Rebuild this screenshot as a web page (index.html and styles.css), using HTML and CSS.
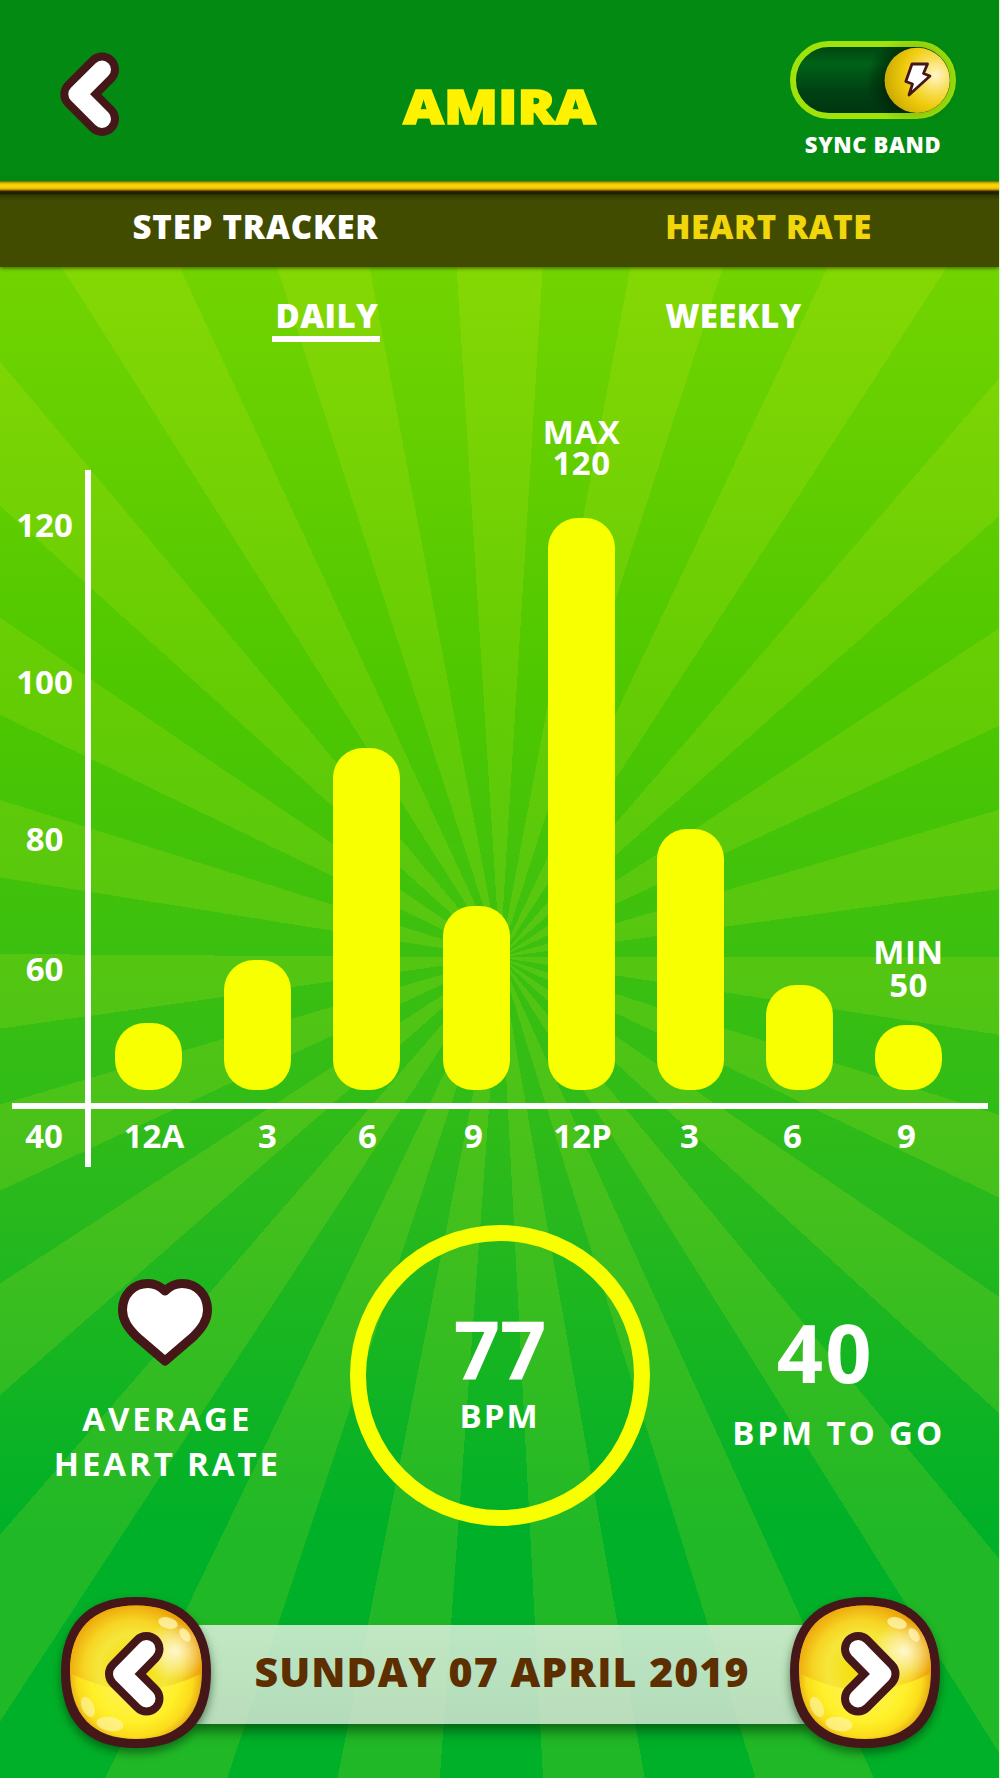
FILE: index.html
```
<!DOCTYPE html>
<html lang="en">
<head>
  <meta charset="UTF-8">
  <meta name="viewport" content="width=device-width, initial-scale=1.0">
  <title>Heart Rate</title>
  <link rel="stylesheet" href="styles.css">
</head>
<body>
  <div class="app">
    <header class="header">
      <a class="back" href="#" aria-label="Back">
        <svg width="60" height="86" viewBox="0 0 60 86">
          <path class="chevron-outline" d="M42 17.5 L17.3 42.2 L42 66.9"/>
          <path class="chevron" d="M42 17.5 L17.3 42.2 L42 66.9"/>
        </svg>
      </a>
      <h1 class="title">AMIRA</h1>
      <div class="sync">
        <svg class="toggle" width="166" height="78" viewBox="0 0 166 78">
          <defs>
            <linearGradient id="track" x1="0" y1="0" x2="0" y2="1">
              <stop offset="0" stop-color="#00420f"/>
              <stop offset="0.28" stop-color="#006218"/>
              <stop offset="0.65" stop-color="#004113"/>
              <stop offset="1" stop-color="#003510"/>
            </linearGradient>
            <radialGradient id="knob" cx="0.78" cy="0.42" r="0.75">
              <stop offset="0" stop-color="#fff6c8"/>
              <stop offset="0.35" stop-color="#f8de55"/>
              <stop offset="0.65" stop-color="#efcb0c"/>
              <stop offset="1" stop-color="#cfae04"/>
            </radialGradient>
            <radialGradient id="knobShade">
              <stop offset="0.6" stop-color="#001c06" stop-opacity="0.85"/>
              <stop offset="1" stop-color="#001c06" stop-opacity="0"/>
            </radialGradient>
            <clipPath id="trackClip">
              <rect x="3" y="3" width="160" height="72" rx="36"/>
            </clipPath>
          </defs>
          <rect x="3" y="3" width="160" height="72" rx="36" fill="url(#track)"/>
          <circle cx="124" cy="40" r="48" fill="url(#knobShade)" opacity="0.65" clip-path="url(#trackClip)"/>
          <rect x="3" y="3" width="160" height="72" rx="36" fill="none" stroke="#a0e30b" stroke-width="6"/>
          <circle cx="124" cy="40" r="46" fill="url(#knobShade)" opacity="0.2"/>
          <circle cx="127.2" cy="39.3" r="32.6" fill="url(#knob)"/>
          <path d="M122 23 H137.5 L133.5 32.5 L140 35 L119 54 L122.5 43 L115.8 40.5 Z" fill="#fff" stroke="#451719" stroke-width="2.8" stroke-linejoin="round"/>
        </svg>
        <span class="sync-label">SYNC BAND</span>
      </div>
    </header>

    <nav class="tabs">
      <a class="tab" href="#">STEP TRACKER</a>
      <a class="tab active" href="#">HEART RATE</a>
    </nav>

    <nav class="periods">
      <a class="period active" href="#">DAILY</a>
      <a class="period" href="#">WEEKLY</a>
    </nav>

    <section class="chart">
      <div class="y-labels">
        <span>120</span>
        <span>100</span>
        <span>80</span>
        <span>60</span>
      </div>
      <div class="y-axis"></div>
      <div class="bars">
        <div class="column"><div class="bar" style="height: 67px"></div></div>
        <div class="column"><div class="bar" style="height: 130px"></div></div>
        <div class="column"><div class="bar" style="height: 342px"></div></div>
        <div class="column"><div class="bar" style="height: 184px"></div></div>
        <div class="column">
          <div class="note max">MAX<br>120</div>
          <div class="bar" style="height: 572px"></div>
        </div>
        <div class="column"><div class="bar" style="height: 261px"></div></div>
        <div class="column"><div class="bar" style="height: 105px"></div></div>
        <div class="column">
          <div class="note min">MIN<br>50</div>
          <div class="bar" style="height: 65px"></div>
        </div>
      </div>
      <div class="x-axis"></div>
      <div class="origin">40</div>
      <div class="x-labels">
        <span>12A</span>
        <span>3</span>
        <span>6</span>
        <span>9</span>
        <span>12P</span>
        <span>3</span>
        <span>6</span>
        <span>9</span>
      </div>
    </section>

    <section class="stats">
      <div class="average">
        <svg width="94" height="88" viewBox="0 0 94 88">
          <path d="M47 12 C42 7 36 4.5 30 4.5 C15 4.5 4.5 16 4.5 31 C4.5 42 11 50 19 58 L47 82 L75 58 C83 50 89.5 42 89.5 31 C89.5 16 79 4.5 64 4.5 C58 4.5 52 7 47 12 Z" fill="#fff" stroke="#451719" stroke-width="9" stroke-linejoin="round"/>
        </svg>
        <p class="caption">AVERAGE<br>HEART RATE</p>
      </div>
      <div class="ring">
        <div class="number">77</div>
        <div class="unit">BPM</div>
      </div>
      <div class="remaining">
        <div class="number">40</div>
        <div class="caption">BPM TO GO</div>
      </div>
    </section>

    <footer class="date-nav">
      <a class="date-btn" href="#" aria-label="Previous day">
        <svg width="150" height="151" viewBox="0 0 150 151">
          <defs>
            <radialGradient id="dome" gradientUnits="userSpaceOnUse" cx="72" cy="72" r="70">
              <stop offset="0" stop-color="#f3dc00"/>
              <stop offset="0.5" stop-color="#f6e63a"/>
              <stop offset="0.7" stop-color="#f6d524"/>
              <stop offset="1" stop-color="#eb9a04"/>
            </radialGradient>
            <radialGradient id="bowl" gradientUnits="userSpaceOnUse" cx="74" cy="82" r="72">
              <stop offset="0" stop-color="#fff36a"/>
              <stop offset="0.6" stop-color="#fff02a"/>
              <stop offset="0.8" stop-color="#fbdc1a"/>
              <stop offset="1" stop-color="#dc8f14"/>
            </radialGradient>
            <radialGradient id="shine">
              <stop offset="0" stop-color="#fffbe0" stop-opacity="0.9"/>
              <stop offset="1" stop-color="#fffbe0" stop-opacity="0"/>
            </radialGradient>
            <clipPath id="face">
              <path d="M75 8.5 C119 8.5 141 34 141 74 C141 117 119 142 75 142 C31 142 9 117 9 74 C9 34 31 8.5 75 8.5 Z"/>
            </clipPath>
            <g id="button">
              <path d="M75 0 C126 0 150 30 150 75 C150 123 126 151 75 151 C24 151 0 123 0 75 C0 30 24 0 75 0 Z" fill="#451719"/>
              <g clip-path="url(#face)">
                <rect width="150" height="151" fill="url(#bowl)"/>
                <path d="M0 0 H150 V71 Q112 93 75 93 Q38 93 0 71 Z" fill="url(#dome)"/>
                <ellipse cx="114" cy="54" rx="32" ry="30" fill="url(#shine)"/>
              </g>
              <g fill="#fff6b0" opacity="0.8">
                <ellipse cx="107" cy="26" rx="10" ry="5.5" transform="rotate(14 107 26)"/>
                <ellipse cx="124" cy="38" rx="4.5" ry="7.5" transform="rotate(-35 124 38)"/>
                <ellipse cx="27" cy="110" rx="6" ry="11" transform="rotate(-25 27 110)" opacity="0.75"/>
                <ellipse cx="49" cy="127" rx="13.5" ry="7" transform="rotate(9 49 127)" opacity="0.8"/>
              </g>
            </g>
          </defs>
          <use href="#button"/>
          <path class="chevron-outline" d="M85.5 52 L61 77 L85.5 101.5"/>
          <path class="chevron" d="M85.5 52 L61 77 L85.5 101.5"/>
        </svg>
      </a>
      <div class="date">SUNDAY 07 APRIL 2019</div>
      <a class="date-btn" href="#" aria-label="Next day">
        <svg width="150" height="151" viewBox="0 0 150 151">
          <use href="#button"/>
          <path class="chevron-outline" d="M68 52 L92.5 77 L68 101.5"/>
          <path class="chevron" d="M68 52 L92.5 77 L68 101.5"/>
        </svg>
      </a>
    </footer>
  </div>
</body>
</html>
```
FILE: styles.css
```
* {
  box-sizing: border-box;
}
body {
  margin: 0;
  font-family: "Open Sans", "Noto Sans", sans-serif;
  font-size: 33px;
  font-weight: 700;
  color: #fff;
}
a {
  color: inherit;
  text-decoration: none;
}
svg {
  display: block;
}
.app {
  width: 1000px;
  height: 1778px;
  border-right: 1px solid #d9f3d3;
  overflow: hidden;
  /* sunburst over the vertical green fade */
  background:
    conic-gradient(from 0deg at 500px 957.5px,
      var(--ray) 0 3.54deg, transparent 0 10.7deg,
      var(--ray) 0 17.9deg, transparent 0 25.4deg,
      var(--ray) 0 32.9deg, transparent 0 40.75deg,
      var(--ray) 0 48.5deg, transparent 0 56.6deg,
      var(--ray) 0 65.1deg, transparent 0 73.5deg,
      var(--ray) 0 82.2deg, transparent 0 90deg,
      var(--ray) 0 98.8deg, transparent 0 107.5deg,
      var(--ray) 0 115.7deg, transparent 0 124.2deg,
      var(--ray) 0 132.4deg, transparent 0 140.3deg,
      var(--ray) 0 147.9deg, transparent 0 155.5deg,
      var(--ray) 0 162.7deg, transparent 0 170deg,
      var(--ray) 0 177deg, transparent 0 184.2deg,
      var(--ray) 0 191.2deg, transparent 0 198.4deg,
      var(--ray) 0 205.7deg, transparent 0 213.2deg,
      var(--ray) 0 220.9deg, transparent 0 228.8deg,
      var(--ray) 0 236.9deg, transparent 0 245deg,
      var(--ray) 0 253.6deg, transparent 0 261.9deg,
      var(--ray) 0 270.4deg, transparent 0 279.1deg,
      var(--ray) 0 287.5deg, transparent 0 295.9deg,
      var(--ray) 0 304.2deg, transparent 0 312.1deg,
      var(--ray) 0 320deg, transparent 0 327.6deg,
      var(--ray) 0 335.1deg, transparent 0 342.1deg,
      var(--ray) 0 349.3deg, transparent 0 356.4deg,
      var(--ray) 0 360deg),
    linear-gradient(#72d400 270px, #68d000 400px, #4dc700 700px, #3cc00f 950px, #29b91c 1200px, #00b028 1530px);
  --ray: rgba(255, 240, 30, 0.13);
}

.header {
  display: flex;
  align-items: flex-start;
  justify-content: space-between;
  height: 181px;
  padding: 0 43px 0 60px;
  background: #038a12;
}
.back {
  width: 166px;
  margin-top: 52px;
}
.title {
  margin: 81px 16px 0 0;
  font-size: 48px;
  line-height: 50px;
  font-weight: 800;
  color: #fff200;
  -webkit-text-stroke: 1.6px #fff200;
  transform: scaleX(1.165);
}
.sync {
  margin-top: 41px;
  text-align: center;
}
.sync-label {
  display: block;
  margin-top: 10px;
  font-size: 22px;
  line-height: 30px;
  font-weight: 800;
  letter-spacing: 0.6px;
}
.chevron-outline,
.chevron {
  fill: none;
  stroke: #fff;
  stroke-width: 18px;
  stroke-linecap: round;
  stroke-linejoin: round;
}
.chevron-outline {
  stroke: #451719;
  stroke-width: 34px;
}

.tabs {
  display: grid;
  grid-template-columns: 511px 1fr;
  height: 86px;
  padding-top: 10px;
  background: linear-gradient(#3d7a0e, #dfae07 2px, #f8d900 4px, #f4cc05 7px, #b98605 9px, #3a2a04 10px, #191c04 12px, #2f3802 14px, #414c00 19px);
  box-shadow: 0 1px 4px #3f5a00;
  line-height: 71px;
  text-align: center;
  font-weight: 800;
  letter-spacing: 0.8px;
}
.tab.active {
  padding-left: 27px;
  color: #f0d60a;
  letter-spacing: 0.5px;
}

.periods {
  display: grid;
  grid-template-columns: 408px 407px;
  justify-items: center;
  margin: 27px 0 0 122px;
  line-height: 43px;
  font-weight: 800;
  letter-spacing: 0.4px;
}
.period {
  height: 48px;
}
.period.active {
  padding: 0 2px 0 4px;
  border-bottom: 6px solid #fff;
}

.chart {
  display: grid;
  grid-template-columns: 85px 6px 1fr;
  grid-template-rows: 633px 6px 58px;
  margin-top: 128px;
  text-align: center;
}
.y-labels {
  display: grid;
  grid-template-rows: 109px 204px 110px 151px;
  align-content: start;
  align-items: center;
  padding-left: 4px;
}
.y-axis {
  grid-area: 1 / 2 / 4 / 3;
  background: #fff;
}
.x-axis {
  grid-area: 2 / 1 / 3 / 4;
  margin: 0 11px 0 12px;
  background: #fff;
}
.bars {
  grid-area: 1 / 3;
  display: grid;
  grid-template-columns: 108px 110px 109px 110px 101px 116px 102px 117px;
  grid-template-rows: 620px;
  padding-left: 3px;
}
.column {
  display: flex;
  flex-direction: column;
  justify-content: flex-end;
  align-items: center;
}
.bar {
  flex-shrink: 0;
  width: 67px;
  border-radius: 30px;
  background: #f7ff00;
}
.note {
  flex-shrink: 0;
  letter-spacing: 0.5px;
}
.max {
  margin-bottom: 40px;
  line-height: 31px;
}
.min {
  margin-bottom: 24px;
  line-height: 33px;
}
.origin {
  grid-area: 3 / 1;
  padding-left: 3px;
  line-height: 54px;
}
.x-labels {
  grid-area: 3 / 3;
  display: grid;
  grid-template-columns: 126px 101px 99px 113px 105px 109px 97px 131px;
  line-height: 54px;
}

.stats {
  display: flex;
  height: 301px;
  margin-top: 58px;
  text-align: center;
}
.average {
  display: flex;
  flex-direction: column;
  align-items: center;
  width: 330px;
  padding-top: 54px;
}
.caption {
  margin: 29px 0 0;
  padding-left: 5px;
  line-height: 45px;
  letter-spacing: 2.9px;
}
.ring {
  width: 301px;
  margin-left: 20px;
  padding-top: 67px;
  border: 16px solid #f7ff00;
  border-radius: 50%;
}
.number {
  font-size: 81px;
  line-height: 80px;
}
.unit {
  margin-top: 8px;
  line-height: 40px;
  letter-spacing: 2px;
  text-indent: -1px;
}
.remaining {
  width: 324px;
  margin-left: 25px;
  padding-top: 87px;
}
.remaining .number {
  margin-left: -24px;
  letter-spacing: 2px;
}
.remaining .caption {
  margin-top: 18px;
  padding-left: 3px;
}

.date-nav {
  display: flex;
  margin: 71px 59px 0 61px;
}
.date-btn {
  position: relative;
  flex: none;
  border-radius: 70px;
  filter: drop-shadow(0 5px 5px rgba(0, 50, 10, 0.55));
}
.date {
  flex: 1;
  height: 99px;
  margin: 28px -20px 0;
  background: linear-gradient(rgba(226, 242, 226, 0.83), rgba(216, 228, 216, 0.83));
  box-shadow: 0 9px 12px -2px rgba(0, 60, 10, 0.65);
  font-size: 41px;
  font-weight: 800;
  line-height: 93px;
  text-align: center;
  text-indent: 3px;
  letter-spacing: 1.07px;
  color: #5c2e00;
}
```
